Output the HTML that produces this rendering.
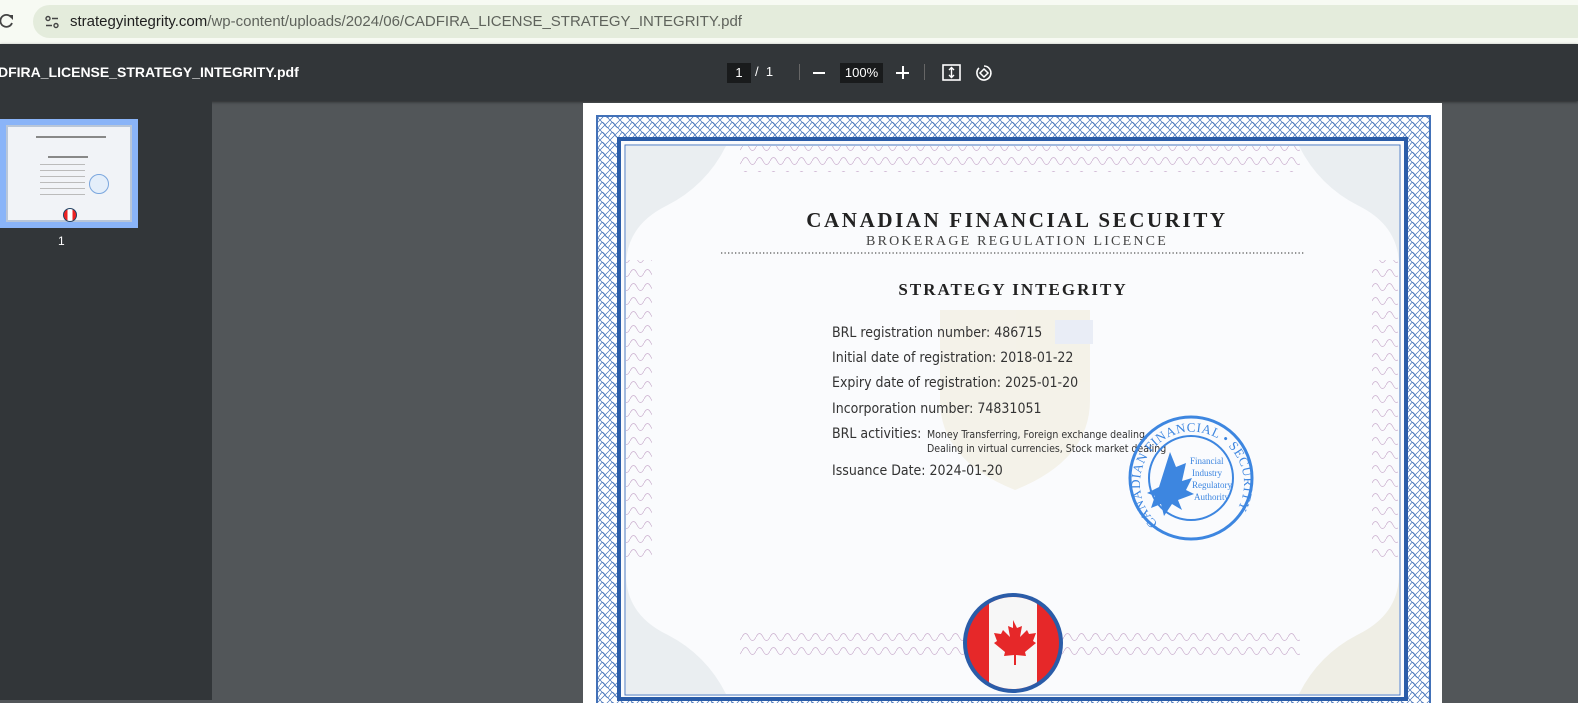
<!DOCTYPE html>
<html><head><meta charset="utf-8"><style>
*{margin:0;padding:0;box-sizing:border-box}
body{width:1578px;height:700px;overflow:hidden;background:#525659;font-family:"Liberation Sans",sans-serif;position:relative}
.top{position:absolute;left:0;top:0;width:1578px;height:44px;background:#f7faf3}
.url{position:absolute;left:33px;top:5px;width:1560px;height:33px;border-radius:17px;background:#e4ecdc;color:#1f1f1f;font-size:15px;line-height:33px;padding-left:37px}
.url .g{color:#5f635c}
.bar{position:absolute;left:0;top:44px;width:1578px;height:57px;background:#323639;color:#fff;box-shadow:0 1px 3px rgba(0,0,0,.5)}
.side{position:absolute;left:0;top:101px;width:212px;height:599px;background:#323639}
.page{position:absolute;left:583px;top:103px;width:859px;height:600px;background:#fff}
.sv{font-family:"Liberation Serif",serif;font-weight:bold;fill:#222}
.dt{font-family:"DejaVu Sans Condensed","DejaVu Sans",sans-serif;fill:#333}
</style></head><body>
<div class="top">
<svg style="position:absolute;left:0;top:13px" width="14" height="16" viewBox="0 0 14 16"><path d="M11 4A6 6 0 1 0 12 10" fill="none" stroke="#444" stroke-width="1.8"/><path d="M8 2h5v5z" fill="#444"/></svg>
<div class="url"><svg style="position:absolute;left:11px;top:9px" width="16" height="16" viewBox="0 0 16 16"><circle cx="4" cy="4.5" r="2" fill="none" stroke="#444" stroke-width="1.4"/><path d="M8 4.5h6M2 11.5h6" stroke="#444" stroke-width="1.4"/><circle cx="12" cy="11.5" r="2" fill="none" stroke="#444" stroke-width="1.4"/></svg>strategyintegrity.com<span class="g">/wp-content/uploads/2024/06/CADFIRA_LICENSE_STRATEGY_INTEGRITY.pdf</span></div>
</div>
<div class="bar">
<div style="position:absolute;left:-2px;top:20px;font-size:14px;font-weight:bold">DFIRA_LICENSE_STRATEGY_INTEGRITY.pdf</div>
<div style="position:absolute;left:727px;top:19px;width:24px;height:20px;background:#191b1c;font-size:13px;text-align:center;line-height:20px">1</div>
<div style="position:absolute;left:755px;top:20px;font-size:13px">/&nbsp;&nbsp;1</div>
<div style="position:absolute;left:799px;top:20px;width:1px;height:16px;background:#666"></div>
<div style="position:absolute;left:813px;top:28px;width:12px;height:2px;background:#fff"></div>
<div style="position:absolute;left:840px;top:19px;width:43px;height:20px;background:#191b1c;font-size:13px;text-align:center;line-height:20px">100%</div>
<div style="position:absolute;left:896px;top:28px;width:13px;height:2px;background:#fff"></div>
<div style="position:absolute;left:901.5px;top:22px;width:2px;height:13px;background:#fff"></div>
<div style="position:absolute;left:924px;top:20px;width:1px;height:16px;background:#666"></div>
<svg style="position:absolute;left:942px;top:20px" width="20" height="18" viewBox="0 0 20 18"><rect x="1" y="1" width="17" height="15" fill="none" stroke="#fff" stroke-width="1.6"/><path d="M9.5 4v9M7 6l2.5-2.5L12 6M7 11l2.5 2.5L12 11" fill="none" stroke="#fff" stroke-width="1.4"/></svg>
<svg style="position:absolute;left:974px;top:19px" width="20" height="20" viewBox="0 0 20 20"><path d="M5 5A7 7 0 1 0 10 3" fill="none" stroke="#fff" stroke-width="1.6"/><path d="M10 6l4 4-4 4-4-4z" fill="none" stroke="#fff" stroke-width="1.5"/></svg>
</div>
<div class="side">
<div style="position:absolute;left:0;top:18px;width:138px;height:109px;background:#8ab4f8;padding:6px"><div style="width:126px;height:97px;background:#f1f3f7;border:2px solid #b9c6d8;position:relative">
<div style="position:absolute;left:28px;top:9px;width:70px;height:2px;background:#888"></div>
<div style="position:absolute;left:40px;top:29px;width:40px;height:2px;background:#888"></div>
<div style="position:absolute;left:32px;top:37px;width:45px;height:32px;background:repeating-linear-gradient(#bbb 0 1px,transparent 1px 6px)"></div>
<div style="position:absolute;left:81px;top:47px;width:20px;height:20px;border-radius:50%;border:1px solid #7aa6de;background:#e4eefa"></div>
<div style="position:absolute;left:55px;top:81px;width:14px;height:14px;border-radius:50%;background:linear-gradient(90deg,#e22 30%,#fff 30% 70%,#e22 70%);border:1px solid #246"></div>
</div></div>
<div style="position:absolute;left:58px;top:133px;color:#fff;font-size:12px">1</div>
</div>
<div class="page">
<svg width="859" height="600" viewBox="583 103 859 600" style="position:absolute;left:0;top:0">
<defs>
<pattern id="mesh" width="10" height="10" patternUnits="userSpaceOnUse"><path d="M0 5Q2.5 0 5 5T10 5M0 0L10 10M10 0L0 10" fill="none" stroke="#3f6fb8" stroke-width=".7"/></pattern>
<pattern id="pm" width="14" height="14" patternUnits="userSpaceOnUse"><path d="M0 7Q3.5 0 7 7T14 7" fill="none" stroke="#b48bb8" stroke-width=".7"/></pattern>
</defs>
<rect x="597" y="116" width="833" height="600" fill="url(#mesh)"/>
<rect x="597" y="116" width="833" height="600" fill="none" stroke="#4271b8" stroke-width="2"/>
<rect x="619" y="139" width="787" height="560" fill="#fafbfd" stroke="#2a5ca8" stroke-width="4"/>
<rect x="625" y="145" width="775" height="550" fill="none" stroke="#4a78c0" stroke-width="1"/>
<rect x="740" y="146" width="560" height="26" fill="url(#pm)" opacity=".7"/>
<rect x="740" y="632" width="560" height="28" fill="url(#pm)" opacity=".7"/>
<rect x="626" y="260" width="26" height="300" fill="url(#pm)" opacity=".7"/>
<rect x="1372" y="260" width="26" height="300" fill="url(#pm)" opacity=".7"/>
<path d="M626 146h100q-20 40-60 60t-40 60z" fill="#dfe6ea" opacity=".6"/>
<path d="M1399 146h-100q20 40 60 60t40 60z" fill="#dfe6ea" opacity=".6"/>
<path d="M1399 694h-100q20-40 60-60t40-60z" fill="#e8e6d6" opacity=".6"/>
<path d="M626 694h100q-20-40-60-60t-40-60z" fill="#dfe6ea" opacity=".6"/>
<text x="1017" y="227" text-anchor="middle" class="sv" font-size="21" letter-spacing="2.6">CANADIAN FINANCIAL SECURITY</text>
<text x="1017" y="245" text-anchor="middle" font-family="Liberation Serif,serif" font-size="14" fill="#444" letter-spacing="2.2">BROKERAGE REGULATION LICENCE</text>
<line x1="721" y1="253" x2="1304" y2="253" stroke="#555" stroke-width="1.3" stroke-dasharray="1.3 2.2"/>
<text x="1013" y="295" text-anchor="middle" class="sv" font-size="17" letter-spacing="2">STRATEGY INTEGRITY</text>
<g opacity=".1"><path d="M940 310h150v90q0 60-75 90q-75-30-75-90z" fill="#c9a83a"/><rect x="1055" y="320" width="38" height="24" fill="#5a79c0"/></g>
<g class="dt" font-size="14">
<text x="832" y="337">BRL registration number: 486715</text>
<text x="832" y="362">Initial date of registration: 2018-01-22</text>
<text x="832" y="387">Expiry date of registration: 2025-01-20</text>
<text x="832" y="413">Incorporation number: 74831051</text>
<text x="832" y="438">BRL activities:</text>
<text x="927" y="438" font-size="10.5">Money Transferring, Foreign exchange dealing,</text>
<text x="927" y="452" font-size="10.5">Dealing in virtual currencies, Stock market dealing</text>
<text x="832" y="475">Issuance Date: 2024-01-20</text>
</g>
<g fill="none" stroke="#3d86e0"><circle cx="1191" cy="478" r="61" stroke-width="3"/><circle cx="1191" cy="478" r="42" stroke-width="2"/></g>
<path d="M1170 452l6 15 10-4-4 18 10-3-6 12 8 4-16 6 4 10-10-6-8 12-3-12-10 4 4-12-8-3 12-6z" fill="#3d86e0"/>
<g font-family="Liberation Serif,serif" font-size="9" fill="#3d86e0"><text x="1190" y="464">Financial</text><text x="1192" y="476">Industry</text><text x="1192" y="488">Regulatory</text><text x="1194" y="500">Authority</text></g>
<path id="arc" d="M1158 523A52 52 0 1 1 1226 523" fill="none"/>
<text font-family="Liberation Serif,serif" font-size="13" fill="#3d86e0" letter-spacing=".6"><textPath href="#arc">CANADIAN FINANCIAL • SECURITY</textPath></text>
<circle cx="1013" cy="643" r="50" fill="#2a5ca8"/>
<clipPath id="cc"><circle cx="1013" cy="643" r="46"/></clipPath>
<g clip-path="url(#cc)"><rect x="960" y="590" width="110" height="110" fill="#e62829"/><rect x="989" y="590" width="48" height="110" fill="#f7f7f7"/></g>
<path d="M1013 620l4 8 5-2-2 11 7-7 2 4 7-1-3 8 3 2-11 9 1 4-10-1v10h-2v-10l-10 1 1-4-11-9 3-2-3-8 7 1 2-4 7 7-2-11 5 2z" fill="#e62829"/>
</svg>
</div>
</body></html>
